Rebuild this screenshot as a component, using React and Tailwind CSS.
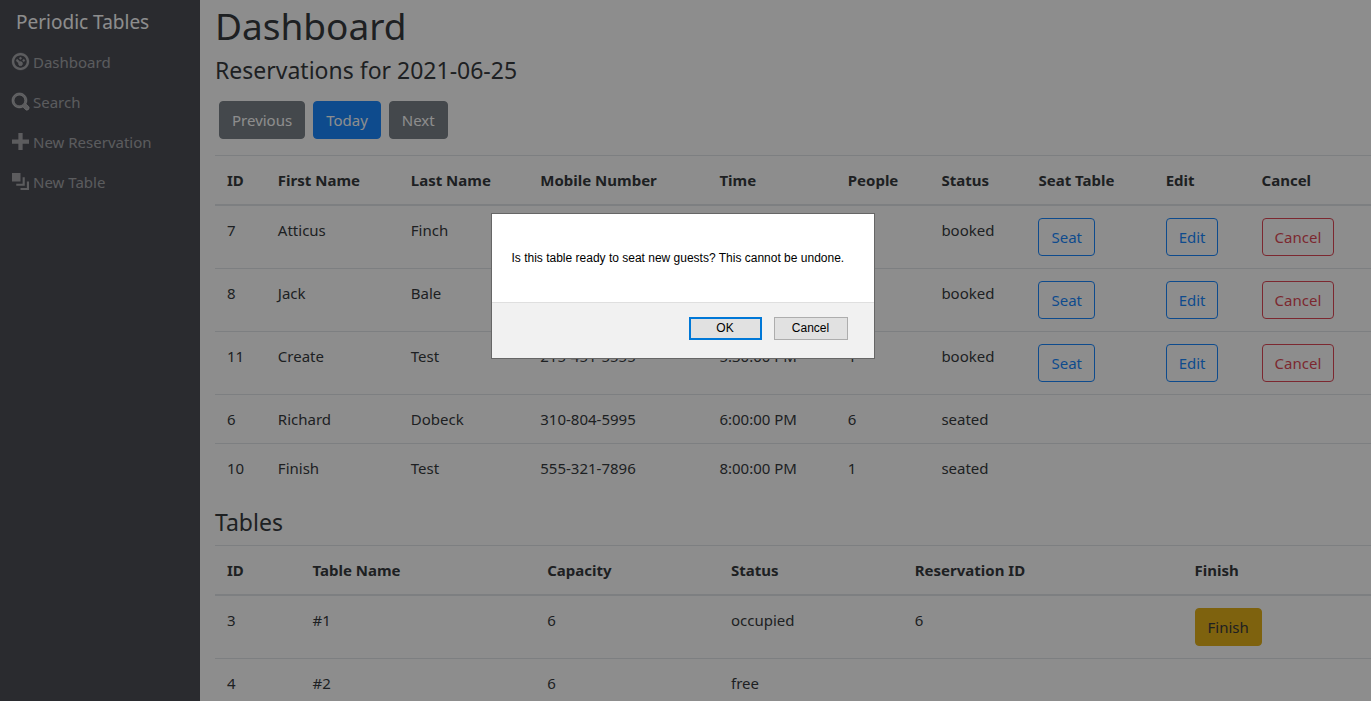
import React from "react";

const ICONS = {
  dashboard:
    "M4 0c-2.2 0-4 1.8-4 4s1.8 4 4 4 4-1.8 4-4-1.8-4-4-4zm0 1c1.66 0 3 1.34 3 3s-1.34 3-3 3-3-1.34-3-3 1.34-3 3-3zm0 1c-.28 0-.5.22-.5.5s.22.5.5.5.5-.22.5-.5-.22-.5-.5-.5zm-1.66 1a.5.5 0 0 0-.19.84l.91.91c-.02.08-.06.16-.06.25 0 .55.45 1 1 1s1-.45 1-1-.45-1-1-1c-.09 0-.17.04-.25.06l-.91-.91a.5.5 0 0 0-.44-.16.5.5 0 0 0-.06 0zm3.16 0c-.28 0-.5.22-.5.5s.22.5.5.5.5-.22.5-.5-.22-.5-.5-.5z",
  search:
    "M3.5 0c-1.93 0-3.5 1.57-3.5 3.5s1.57 3.5 3.5 3.5c.59 0 1.17-.14 1.66-.41a1 1 0 0 0 .13.13l1 1a1.02 1.02 0 1 0 1.44-1.44l-1-1a1 1 0 0 0-.16-.13c.27-.49.44-1.06.44-1.66 0-1.93-1.55-3.5-3.5-3.5zm0 1c1.39 0 2.5 1.11 2.5 2.5 0 .66-.24 1.27-.66 1.72-.01.01-.02.02-.03.03a1 1 0 0 0-.13.13c-.44.4-1.04.63-1.69.63-1.39 0-2.5-1.11-2.5-2.5s1.11-2.5 2.5-2.5z",
  plus: "M3 0v3h-3v2h3v3h2v-3h3v-2h-3v-3h-2z",
  layers: "M0 0v4h4v-4h-4zm5 2v3h-3v1h4v-4h-1zm2 2v3h-3v1h4v-4h-1z",
};

const NAV = [
  ["dashboard", "Dashboard"],
  ["search", "Search"],
  ["plus", "New Reservation"],
  ["layers", "New Table"],
];

const RESERVATIONS = [
  ["7", "Atticus", "Finch", "202-555-0141", "1:30:00 PM", "2", "booked"],
  ["8", "Jack", "Bale", "202-555-0172", "4:00:00 PM", "3", "booked"],
  ["11", "Create", "Test", "215-451-5555", "5:30:00 PM", "1", "booked"],
  ["6", "Richard", "Dobeck", "310-804-5995", "6:00:00 PM", "6", "seated"],
  ["10", "Finish", "Test", "555-321-7896", "8:00:00 PM", "1", "seated"],
];

const TABLES = [
  ["3", "#1", "6", "occupied", "6"],
  ["4", "#2", "6", "free", ""],
];

const BUTTON = "h-[38px] rounded border px-3 text-[15px] leading-6";
const VARIANTS = {
  secondary: "border-[#6c757d] bg-[#6c757d] text-white",
  primary: "border-[#007bff] bg-[#007bff] text-white",
  warning: "border-[#e0a800] bg-[#e0a800] text-[#212529]",
  outlinePrimary: "border-[#007bff] text-[#007bff]",
  outlineDanger: "border-[#dc3545] text-[#dc3545]",
};

function Button({ variant, children }) {
  return (
    <button type="button" className={`${BUTTON} ${VARIANTS[variant]}`}>
      {children}
    </button>
  );
}

function DataTable({ label, columns, children }) {
  return (
    <table aria-label={label} className="mb-4 w-full table-fixed text-left">
      <thead>
        <tr>
          {columns.map(([name, width]) => (
            <th
              key={name}
              scope="col"
              className={`${width} border-t border-b-2 border-[#dee2e6] p-3 font-bold whitespace-nowrap`}
            >
              {name}
            </th>
          ))}
        </tr>
      </thead>
      <tbody>{children}</tbody>
    </table>
  );
}

function Cell({ children }) {
  return <td className="border-t border-[#dee2e6] p-3 align-top whitespace-nowrap">{children}</td>;
}

const RESERVATION_COLUMNS = [
  ["ID", "w-[4.4%]"],
  ["First Name", "w-[11.5%]"],
  ["Last Name", "w-[11.2%]"],
  ["Mobile Number", "w-[15.5%]"],
  ["Time", "w-[11.1%]"],
  ["People", "w-[8.1%]"],
  ["Status", "w-[8.4%]"],
  ["Seat Table", "w-[11%]"],
  ["Edit", "w-[8.3%]"],
  ["Cancel", "w-[10.5%]"],
];

const TABLE_COLUMNS = [
  ["ID", "w-[7.4%]"],
  ["Table Name", "w-[20.3%]"],
  ["Capacity", "w-[15.9%]"],
  ["Status", "w-[15.9%]"],
  ["Reservation ID", "w-[24.2%]"],
  ["Finish", "w-[16.3%]"],
];

function ConfirmDialog() {
  return (
    <div className="fixed inset-0 flex items-start justify-center bg-[#1c1c1c]/50 pt-[213px] pr-1.5">
      <div
        role="alertdialog"
        aria-modal="true"
        aria-describedby="confirm-message"
        className="w-[384px] border border-[#666666] bg-white text-xs text-black font-['Liberation_Sans',Arial,sans-serif]"
      >
        <p id="confirm-message" className="px-5 py-9 whitespace-nowrap">
          Is this table ready to seat new guests? This cannot be undone.
        </p>
        <div className="flex justify-end gap-3 border-t border-[#dfdfdf] bg-[#f1f1f1] pt-[14px] pr-[26px] pb-[18px]">
          <button type="button" className="h-[23px] w-[73px] border-2 border-[#0078d7] bg-[#e1e1e1] pb-0.5">
            OK
          </button>
          <button type="button" className="h-[23px] w-[74px] border border-[#adadad] bg-[#e1e1e1] pb-0.5">
            Cancel
          </button>
        </div>
      </div>
    </div>
  );
}

export default function App() {
  return (
    <div className="flex h-screen overflow-hidden bg-white text-[15px] leading-6 text-[#212529] font-['Segoe_UI','Noto_Sans',sans-serif]">
      <nav className="w-[200px] shrink-0 bg-[#383a43]">
        <a href="#home" className="block px-4 pt-2 text-[19px] leading-7 text-white">
          Periodic Tables
        </a>
        <ul className="pt-1.5">
          {NAV.map(([icon, label]) => (
            <li key={label}>
              <a href={`#${icon}`} className="flex h-10 items-center gap-1 px-3 text-white/50">
                <svg
                  viewBox="0 0 8 8"
                  className="mb-0.5 size-[17px] fill-current stroke-current"
                  strokeWidth={icon === "search" ? 0.35 : icon === "dashboard" ? 0.15 : 0}
                  overflow="visible"
                  aria-hidden="true"
                >
                  <path d={ICONS[icon]} />
                </svg>
                {label}
              </a>
            </li>
          ))}
        </ul>
      </nav>
      <main className="min-w-0 flex-1 pt-0.5 pl-[15px]">
        <h1 className="mb-1.5 text-[37px] leading-12">Dashboard</h1>
        <h2 className="mb-4 text-[23px] leading-[29px]">Reservations for 2021-06-25</h2>
        <div className="mb-4 flex gap-2 pl-1">
          <Button variant="secondary">Previous</Button>
          <Button variant="primary">Today</Button>
          <Button variant="secondary">Next</Button>
        </div>
        <DataTable label="Reservations" columns={RESERVATION_COLUMNS}>
          {RESERVATIONS.map((row) => {
            const booked = row[6] === "booked";
            return (
              <tr key={row[0]}>
                {row.map((value, i) => (
                  <Cell key={i}>{value}</Cell>
                ))}
                <Cell>{booked && <Button variant="outlinePrimary">Seat</Button>}</Cell>
                <Cell>{booked && <Button variant="outlinePrimary">Edit</Button>}</Cell>
                <Cell>{booked && <Button variant="outlineDanger">Cancel</Button>}</Cell>
              </tr>
            );
          })}
        </DataTable>
        <h2 className="mb-2 text-[23px] leading-[29px]">Tables</h2>
        <DataTable label="Tables" columns={TABLE_COLUMNS}>
          {TABLES.map((row) => (
            <tr key={row[0]}>
              {row.map((value, i) => (
                <Cell key={i}>{value}</Cell>
              ))}
              <Cell>{row[3] === "occupied" && <Button variant="warning">Finish</Button>}</Cell>
            </tr>
          ))}
        </DataTable>
      </main>
      <ConfirmDialog />
    </div>
  );
}
